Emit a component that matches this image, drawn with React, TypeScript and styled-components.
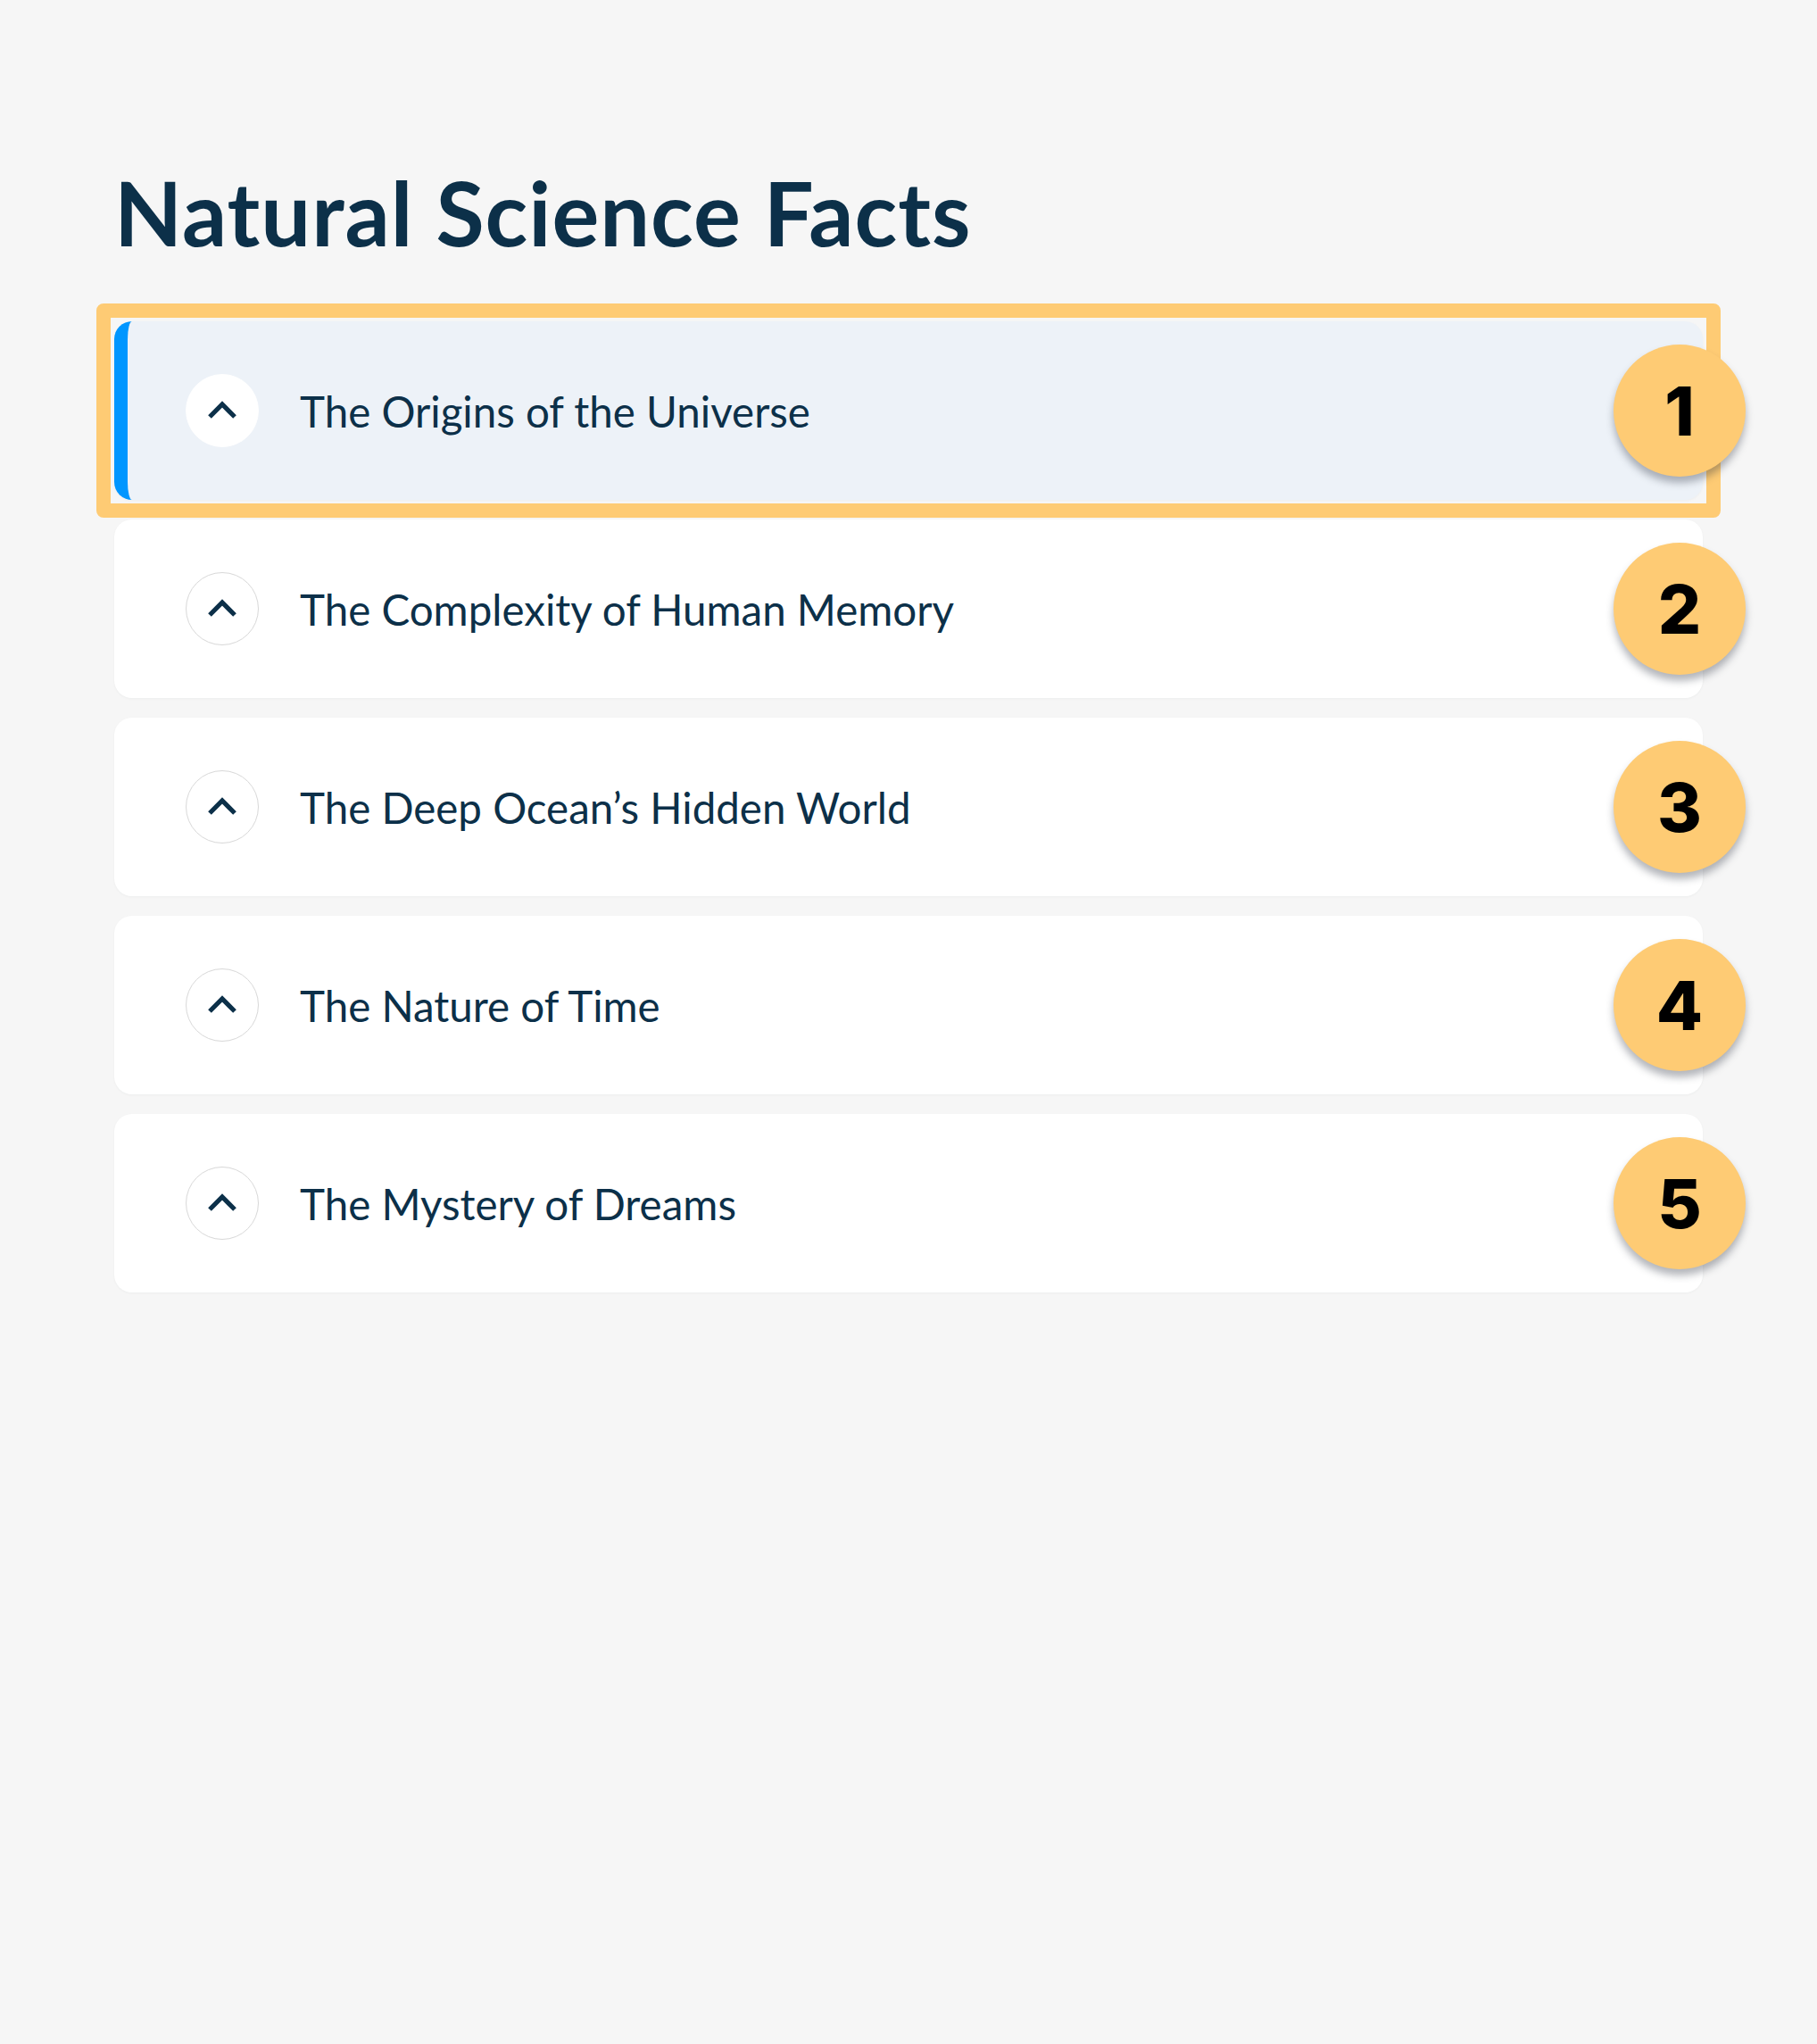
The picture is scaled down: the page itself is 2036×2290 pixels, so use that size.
import React from "react";
import styled, { createGlobalStyle, css } from "styled-components";

const GlobalStyle = createGlobalStyle`
  html, body {
    margin: 0;
    padding: 0;
    background: #f6f6f6;
  }
  body {
    font-family: "Lato", "Inter", sans-serif;
    color: #0c3049;
  }
`;

const Page = styled.main`
  min-height: 2290px;
  box-sizing: border-box;
  padding: 178px 128px 0 128px;
`;

const Title = styled.h1`
  margin: 0 0 63px 0;
  font-family: "Lato", sans-serif;
  font-weight: 700;
  font-size: 99px;
  line-height: normal;
  letter-spacing: 1px;
  color: #0c3049;
`;

const List = styled.ul`
  list-style: none;
  margin: 0;
  padding: 0;
  display: flex;
  flex-direction: column;
  gap: 22px;
`;

const STRIPE = 15;

const Card = styled.li<{ $active?: boolean }>`
  position: relative;
  box-sizing: border-box;
  height: 200px;
  display: flex;
  align-items: center;
  gap: 46px;
  padding-left: 80px;
  border-radius: 20px;
  background: #ffffff;
  box-shadow: 0 1px 3px rgba(20, 40, 60, 0.04);

  ${(p) =>
    p.$active &&
    css`
      background: #edf2f8;
      border-left: ${STRIPE}px solid #0096ff;
      padding-left: ${80 - STRIPE}px;

      &::before {
        content: "";
        position: absolute;
        top: -20px;
        bottom: -20px;
        left: -${20 + STRIPE}px;
        right: -20px;
        border: 16px solid #fecb74;
        border-radius: 8px;
        z-index: 1;
        pointer-events: none;
      }
    `}
`;

const ToggleButton = styled.button<{ $active?: boolean }>`
  flex: 0 0 auto;
  width: 82px;
  height: 82px;
  border-radius: 50%;
  box-sizing: border-box;
  padding: 0;
  display: flex;
  align-items: center;
  justify-content: center;
  background: #ffffff;
  border: 1.5px solid ${(p) => (p.$active ? "#ffffff" : "#d8d8d8")};
  color: #0c3049;
  cursor: pointer;
`;

const ItemTitle = styled.span`
  font-family: "Lato", sans-serif;
  font-weight: 400;
  font-size: 47.5px;
  line-height: normal;
  color: #0c3049;
`;

const Badge = styled.span`
  position: absolute;
  z-index: 2;
  right: -48px;
  top: 50%;
  transform: translateY(-50%);
  width: 148px;
  height: 148px;
  border-radius: 50%;
  background: #fecb74;
  box-shadow: 0 7px 9px rgba(40, 45, 60, 0.35);
  display: flex;
  align-items: center;
  justify-content: center;
  font-family: "Inter", "Roboto", sans-serif;
  font-weight: 800;
  font-size: 76px;
  line-height: 1;
  color: #000000;
`;

const Chevron = () => (
  <svg width="40" height="28" viewBox="0 0 40 28" aria-hidden="true">
    <polyline
      points="6,21 20,7 34,21"
      fill="none"
      stroke="currentColor"
      strokeWidth="5.2"
      strokeLinecap="butt"
      strokeLinejoin="miter"
    />
  </svg>
);

const items = [
  "The Origins of the Universe",
  "The Complexity of Human Memory",
  "The Deep Ocean\u2019s Hidden World",
  "The Nature of Time",
  "The Mystery of Dreams",
];

export default function App() {
  return (
    <>
      <GlobalStyle />
      <Page>
        <Title>Natural Science Facts</Title>
        <List>
          {items.map((label, i) => (
            <Card key={label} $active={i === 0}>
              <ToggleButton $active={i === 0} aria-label="Toggle">
                <Chevron />
              </ToggleButton>
              <ItemTitle>{label}</ItemTitle>
              <Badge>{i + 1}</Badge>
            </Card>
          ))}
        </List>
      </Page>
    </>
  );
}
